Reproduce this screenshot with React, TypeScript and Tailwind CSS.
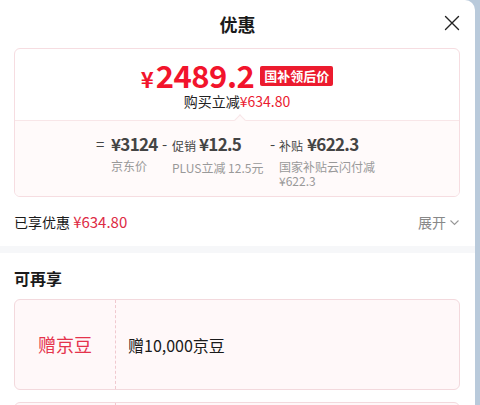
import React from "react";

const font = { fontFamily: '"Noto Sans CJK SC", "Noto Sans", sans-serif' };

export default function App() {
  return (
    <div className="w-[480px] h-[405px] bg-[#b9cadb] overflow-hidden" style={font}>
      <div className="w-[475px] h-[405px] bg-white rounded-tr-[10px] overflow-hidden">
        {/* header */}
        <div className="relative h-[48px] flex items-center justify-center">
          <span className="text-[18px] font-bold text-[#1a1a1a] leading-none">优惠</span>
          <svg className="absolute left-[444px] top-[15px]" width="16" height="16" viewBox="0 0 16 16">
            <path d="M1.5 1.5 L14.5 14.5 M14.5 1.5 L1.5 14.5" stroke="#222" strokeWidth="1.4" strokeLinecap="round" />
          </svg>
        </div>

        {/* price card */}
        <div className="mx-[14px] w-[446px] rounded-[6px] border border-[#f6dde1] overflow-hidden">
          <div className="h-[71px] flex flex-col items-center pt-[9px]">
            <div className="flex items-center gap-[6px] h-[32px]">
              <span className="text-[#f2142c] font-bold leading-none flex items-baseline">
                <span className="text-[22px] mr-[2px]">¥</span>
                <span className="text-[31px] tracking-[-0.5px]">2489.2</span>
              </span>
              <span className="bg-[#ec1b2e] text-white text-[13px] font-bold leading-none px-[4px] h-[20px] flex items-center rounded-[2px] mt-[3px]">
                国补领后价
              </span>
            </div>
            <div className="text-[14px] leading-[16px] mt-[3px] text-[#222] whitespace-nowrap">
              <span>购买立减</span>
              <span className="text-[#ea1a2f]">¥634.80</span>
            </div>
          </div>
          <div className="relative border-t border-[#f8e6e8] bg-[#fffafa] h-[76px] pt-[12px] pl-[81px]">
            <div className="absolute left-[221px] top-[-5px] w-[8px] h-[8px] bg-[#fffafa] border-l border-t border-[#f8e6e8] rotate-45" />
            <div className="flex whitespace-nowrap">
              {/* col1 */}
              <div className="flex w-[66px] shrink-0">
                <span className="text-[15px] text-[#444] w-[15px] leading-[22px] shrink-0">=</span>
                <div className="flex flex-col">
                  <span className="text-[17px] font-semibold text-[#444] leading-[22px] tracking-[-0.7px]">¥3124</span>
                  <span className="text-[12px] text-[#999] leading-[16px] mt-[3px]">京东价</span>
                </div>
              </div>
              {/* col2 */}
              <div className="flex w-[108px] shrink-0">
                <span className="text-[15px] text-[#444] w-[10px] leading-[22px] shrink-0">-</span>
                <div className="flex flex-col">
                  <span className="leading-[22px] text-[#444]">
                    <span className="text-[12px] mr-[3px]">促销</span>
                    <span className="text-[17px] font-semibold tracking-[-0.7px]">¥12.5</span>
                  </span>
                  <span className="text-[12px] text-[#999] leading-[16px] mt-[3px]">PLUS立减 12.5元</span>
                </div>
              </div>
              {/* col3 */}
              <div className="flex w-[106px] shrink-0">
                <span className="text-[15px] text-[#444] w-[9px] leading-[22px] shrink-0">-</span>
                <div className="flex flex-col w-[97px]">
                  <span className="leading-[22px] text-[#444]">
                    <span className="text-[12px] mr-[4px]">补贴</span>
                    <span className="text-[17px] font-semibold tracking-[-0.7px]">¥622.3</span>
                  </span>
                  <span className="text-[12px] text-[#999] leading-[14px] mt-[3px] whitespace-normal">国家补贴云闪付减 ¥622.3</span>
                </div>
              </div>
            </div>
          </div>
        </div>

        {/* enjoyed */}
        <div className="h-[49px] flex items-center justify-between px-[14px] pt-[2px]">
          <span className="text-[14px] text-[#1a1a1a]">
            已享优惠 <span className="text-[#dd2b44] text-[15px]">¥634.80</span>
          </span>
          <span className="flex items-center text-[14px] text-[#888] pr-[1px]">
            展开
            <svg width="11" height="11" viewBox="0 0 11 11" className="ml-[3px]">
              <path d="M1.5 3.5 L5.5 7.5 L9.5 3.5" fill="none" stroke="#999" strokeWidth="1.1" />
            </svg>
          </span>
        </div>
        <div className="h-[7px] bg-[#f6f7f9]" />

        {/* can enjoy */}
        <div className="px-[14px] pt-[15px]">
          <div className="text-[16px] font-bold text-[#1a1a1a] leading-[20px]">可再享</div>
          <div className="mt-[11px] w-[446px] h-[91px] rounded-[6px] border border-[#f3d9dd] bg-[#fff8f9] flex">
            <div className="w-[101px] border-r border-dashed border-[#f0c9cf] flex items-center justify-center">
              <span className="text-[18px] text-[#e5334c]">赠京豆</span>
            </div>
            <div className="flex items-center pl-[12px]">
              <span className="text-[16px] text-[#1a1a1a]">赠10,000京豆</span>
            </div>
          </div>
          <div className="mt-[12px] w-[446px] h-[40px] rounded-[6px] border border-[#f3d9dd] bg-[#fff8f9] flex">
            <div className="w-[101px] border-r border-dashed border-[#f0c9cf]" />
          </div>
        </div>
      </div>
    </div>
  );
}
